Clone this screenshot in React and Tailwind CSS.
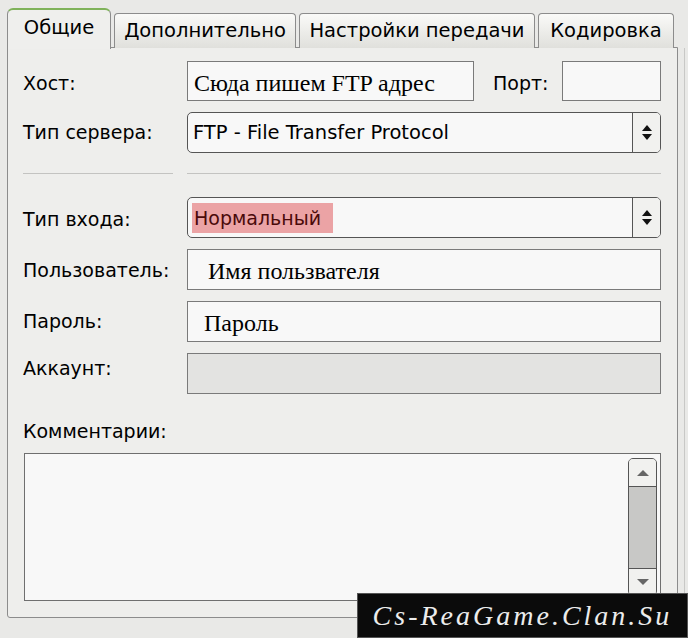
import React from "react";

const ui = { fontFamily: '"DejaVu Sans", Verdana, sans-serif' };
const serif = { fontFamily: '"Liberation Serif", "Times New Roman", serif' };

function Tab({ children, w }) {
  return (
    <div
      className={`h-[35px] ${w} mt-[4px] border border-[#8c8c8c] border-b-0 rounded-t-[4px] bg-gradient-to-b from-[#fafaf8] to-[#e0e0dc] flex items-center justify-center text-[19.5px] text-black leading-none`}
      style={ui}
    >
      {children}
    </div>
  );
}

function Spin() {
  return (
    <div className="w-[28px] h-full border-l border-[#555] flex flex-col items-center justify-center gap-[3px] bg-[#f1f1ef]">
      <svg width="10" height="6" viewBox="0 0 10 6"><path d="M5 0L10 6H0Z" fill="#111" /></svg>
      <svg width="10" height="6" viewBox="0 0 10 6"><path d="M0 0H10L5 6Z" fill="#111" /></svg>
    </div>
  );
}

export default function App() {
  return (
    <div className="w-[688px] h-[638px] relative overflow-hidden bg-[#e9e9e7]" style={ui}>
      {/* tabs */}
      <div className="flex items-end pl-[7px] pt-[7px] gap-[3px] h-[48px] relative z-10">
        <div className="w-[104px] h-[41px] border border-[#8c8c8c] border-b-0 border-t-[2px] border-t-[#7fb25a] rounded-t-[6px] bg-[#efefed] flex items-center justify-center text-[19.5px] text-black leading-none pb-[4px] -mb-px">
          Общие
        </div>
        <Tab w="w-[182px]">Дополнительно</Tab>
        <Tab w="w-[236px]">Настройки передачи</Tab>
        <Tab w="w-[136px]">Кодировка</Tab>
      </div>

      {/* panel */}
      <div className="ml-[7px] w-[671px] h-[571px] -mt-px border border-[#8c8c8c] rounded-b-[3px] bg-[#eeeeec] pl-[15px] pr-[16px] pt-[13px] flex flex-col text-[19px] text-black">
        {/* host */}
        <div className="flex items-center h-[40px]">
          <div className="w-[164px] leading-none pt-[4px]">Хост:</div>
          <div className="w-[287px] h-full border border-[#7a7a7a] bg-[#f8f8f8] flex items-center pl-[6px] pt-[3px] text-[24px] text-black" style={serif}>
            Сюда пишем FTP адрес
          </div>
          <div className="flex-1 pl-[19px] leading-none pt-[4px]">Порт:</div>
          <div className="w-[99px] h-full border border-[#7a7a7a] bg-[#f8f8f8]" />
        </div>

        {/* server type */}
        <div className="flex items-center h-[41px] mt-[11px]">
          <div className="w-[164px] leading-none">Тип сервера:</div>
          <div className="flex-1 h-full border border-[#555] rounded-[5px] bg-[#f8f8f8] flex items-center overflow-hidden">
            <div className="flex-1 pl-[5px] leading-none text-[19.5px]">FTP - File Transfer Protocol</div>
            <Spin />
          </div>
        </div>

        {/* separator */}
        <div className="flex mt-[20px] h-px">
          <div className="w-[150px] bg-[#c3c3c1]" />
          <div className="w-[14px]" />
          <div className="flex-1 bg-[#c3c3c1]" />
        </div>

        {/* login type */}
        <div className="flex items-center h-[41px] mt-[23px]">
          <div className="w-[164px] leading-none pt-[3px]">Тип входа:</div>
          <div className="flex-1 h-full border border-[#555] rounded-[5px] bg-[#f8f8f8] flex items-center overflow-hidden">
            <div className="flex-1 pl-[4px]">
              <div className="w-[141px] h-[30px] bg-[#eba3a5] flex items-center pl-[2px] pt-[2px] text-[#4a0a0a] leading-none">Нормальный</div>
            </div>
            <Spin />
          </div>
        </div>

        {/* user */}
        <div className="flex items-center h-[41px] mt-[11px]">
          <div className="w-[164px] leading-none pt-[2px]">Пользователь:</div>
          <div className="flex-1 h-full border border-[#7a7a7a] bg-[#f8f8f8] flex items-center pl-[20px] pt-[2px] text-[24px] text-black" style={serif}>
            Имя пользвателя
          </div>
        </div>

        {/* password */}
        <div className="flex items-center h-[41px] mt-[11px]">
          <div className="w-[164px] leading-none">Пароль:</div>
          <div className="flex-1 h-full border border-[#7a7a7a] bg-[#f8f8f8] flex items-center pl-[16px] pt-[2px] text-[24px] text-black" style={serif}>
            Пароль
          </div>
        </div>

        {/* account */}
        <div className="flex items-start h-[41px] mt-[11px]">
          <div className="w-[164px] leading-none pt-[6px]">Аккаунт:</div>
          <div className="flex-1 h-full border border-[#7a7a7a] bg-[#e3e3e1]" />
        </div>

        <div className="mt-[28px] leading-none">Комментарии:</div>

        {/* textarea */}
        <div className="mt-[12px] ml-[1px] h-[148px] border border-[#6f6f6f] bg-[#f8f8f8] flex justify-end pr-[3px] pt-[4px] pb-[4px]">
          <div className="w-[29px] h-full border border-[#555] rounded-[5px] flex flex-col overflow-hidden bg-[#c8c8c6]">
            <div className="h-[28px] bg-[#f1f1ef] border-b border-[#555] flex items-center justify-center">
              <svg width="12" height="6" viewBox="0 0 12 6"><path d="M6 0L12 6H0Z" fill="#666" /></svg>
            </div>
            <div className="flex-1" />
            <div className="h-[27px] bg-[#f1f1ef] border-t border-[#555] flex items-center justify-center">
              <svg width="12" height="6" viewBox="0 0 12 6"><path d="M0 0H12L6 6Z" fill="#666" /></svg>
            </div>
          </div>
        </div>
      </div>

      {/* window edge */}
      <div className="absolute top-[48px] right-[3px] w-px h-[560px] bg-[#c8c8c6]" />

      {/* watermark */}
      <div className="absolute left-[357px] top-[593px] w-[331px] h-[45px] bg-[#0b0b0b] border border-[#555] flex items-center justify-center">
        <span className="text-[28px] italic text-[#ececec] tracking-[3px]" style={serif}>
          Cs-ReaGame.Clan.Su
        </span>
      </div>
    </div>
  );
}
